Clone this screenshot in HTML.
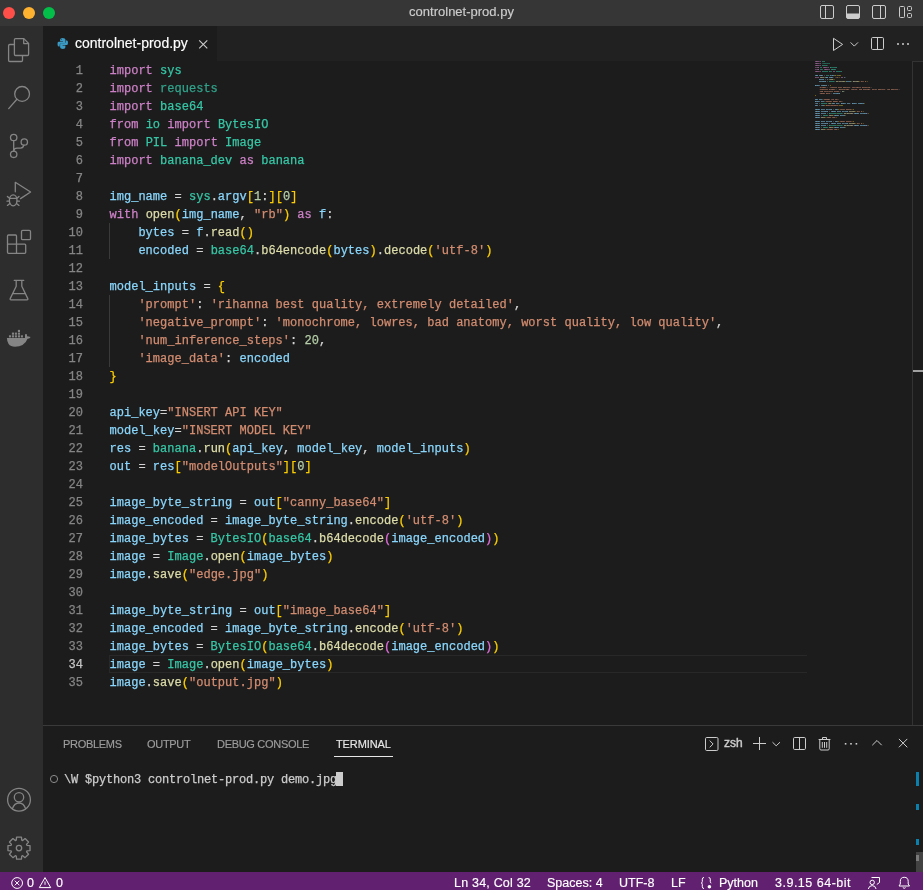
<!DOCTYPE html>
<html><head><meta charset="utf-8">
<style>
*{margin:0;padding:0;box-sizing:border-box}
html,body{width:923px;height:890px;overflow:hidden;background:#1c1c1c}
body{position:relative;font-family:"Liberation Sans",sans-serif;color:#ccc}
#root{position:absolute;left:0;top:0;width:923px;height:890px;will-change:transform;overflow:hidden}
.ln,.num,.term{-webkit-text-stroke:0.25px currentColor}
.st,#tabtext,#ttext,.ptab{-webkit-text-stroke:0.15px currentColor}
.abs{position:absolute}
#title{left:0;top:0;width:923px;height:26px;background:#363636}
.tl{position:absolute;top:7px;width:12px;height:12px;border-radius:50%}
#ttext{position:absolute;left:0;width:923px;top:-1px;height:26px;line-height:26px;text-align:center;font-size:13px;color:#cccccc}
#act{left:0;top:26px;width:43px;height:846px;background:#2d2d2d}
#tabs{left:43px;top:26px;width:880px;height:35px;background:#212121}
#tab{left:43px;top:26px;width:174px;height:35px;background:#1c1c1c}
#tabtext{position:absolute;left:75px;top:26px;height:35px;line-height:35px;font-size:14px;color:#ffffff}
#editor{left:43px;top:61px;width:880px;height:664px;background:#1e1e1e;overflow:hidden}
.num{position:absolute;left:0;width:83px;height:18px;line-height:18px;text-align:right;font-family:"Liberation Mono",monospace;font-size:12px;color:#858585}
.num.cur{color:#c6c6c6}
.ln{position:absolute;left:109.5px;height:18px;line-height:18px;font-family:"Liberation Mono",monospace;font-size:12px;color:#d4d4d4;white-space:pre;letter-spacing:0.02px}
.k{color:#cc80c6}.t{color:#36c7a6}.td{color:#31a28a}.v{color:#8ad6fc}.f{color:#dcdcaa}.s{color:#d28c70}.n{color:#b5cea8}.b1{color:#fcce00}.b2{color:#dc6cd8}
#code{position:absolute;left:0;top:62px;width:923px;height:664px}
#mini{position:absolute;left:815px;top:-1px;width:97px;height:664px;overflow:hidden}
#miniin{position:absolute;left:0;top:-0.7px;transform-origin:0 0;transform:scale(0.1389,0.2)}
.mln{position:absolute;left:0;height:10px;line-height:10px;font-family:"Liberation Mono",monospace;font-size:12px;color:#d4d4d4;white-space:pre;font-weight:bold}
#panel{left:43px;top:725px;width:880px;height:147px;background:#1c1c1c;border-top:1px solid #3a3a3a}
.ptab{position:absolute;top:737px;height:14px;line-height:14px;font-size:11px;color:#9d9d9d;letter-spacing:-0.3px;white-space:nowrap}
#status{left:0;top:872px;width:923px;height:18px;background:#622170}
.st{position:absolute;top:874px;height:18px;line-height:18px;font-size:12.5px;color:#ffffff;white-space:nowrap}
svg{position:absolute;overflow:visible}
</style></head><body><div id="root">
<div id="title" class="abs"></div>
<div class="tl" style="left:3px;background:#ff4f48"></div>
<div class="tl" style="left:23px;background:#ffb22f"></div>
<div class="tl" style="left:43px;background:#03bf4a"></div>
<div id="ttext">controlnet-prod.py</div>

<div id="act" class="abs"></div>
<div id="tabs" class="abs"></div>
<div id="tab" class="abs"></div>
<div id="tabtext">controlnet-prod.py</div>

<div id="code">

<div id="nums" class="abs" style="left:0;top:0">
<div class="num" style="top:0px">1</div>
<div class="num" style="top:18px">2</div>
<div class="num" style="top:36px">3</div>
<div class="num" style="top:54px">4</div>
<div class="num" style="top:72px">5</div>
<div class="num" style="top:90px">6</div>
<div class="num" style="top:108px">7</div>
<div class="num" style="top:126px">8</div>
<div class="num" style="top:144px">9</div>
<div class="num" style="top:162px">10</div>
<div class="num" style="top:180px">11</div>
<div class="num" style="top:198px">12</div>
<div class="num" style="top:216px">13</div>
<div class="num" style="top:234px">14</div>
<div class="num" style="top:252px">15</div>
<div class="num" style="top:270px">16</div>
<div class="num" style="top:288px">17</div>
<div class="num" style="top:306px">18</div>
<div class="num" style="top:324px">19</div>
<div class="num" style="top:342px">20</div>
<div class="num" style="top:360px">21</div>
<div class="num" style="top:378px">22</div>
<div class="num" style="top:396px">23</div>
<div class="num" style="top:414px">24</div>
<div class="num" style="top:432px">25</div>
<div class="num" style="top:450px">26</div>
<div class="num" style="top:468px">27</div>
<div class="num" style="top:486px">28</div>
<div class="num" style="top:504px">29</div>
<div class="num" style="top:522px">30</div>
<div class="num" style="top:540px">31</div>
<div class="num" style="top:558px">32</div>
<div class="num" style="top:576px">33</div>
<div class="num cur" style="top:594px">34</div>
<div class="num" style="top:612px">35</div>
</div>
<div class="abs" style="left:109px;top:593px;width:698px;height:18px;border:1px solid #282828;border-right:none"></div>
<div class="abs" style="left:109px;top:161px;width:1px;height:36px;background:#3a3a3a"></div>
<div class="abs" style="left:109px;top:233px;width:1px;height:72px;background:#3a3a3a"></div>
<div id="lines" class="abs" style="left:0;top:0">
<div class="ln" style="top:0px"><span class="k">import</span> <span class="t">sys</span></div>
<div class="ln" style="top:18px"><span class="k">import</span> <span class="td">requests</span></div>
<div class="ln" style="top:36px"><span class="k">import</span> <span class="t">base64</span></div>
<div class="ln" style="top:54px"><span class="k">from</span> <span class="t">io</span> <span class="k">import</span> <span class="t">BytesIO</span></div>
<div class="ln" style="top:72px"><span class="k">from</span> <span class="t">PIL</span> <span class="k">import</span> <span class="t">Image</span></div>
<div class="ln" style="top:90px"><span class="k">import</span> <span class="t">banana_dev</span> <span class="k">as</span> <span class="t">banana</span></div>
<div class="ln" style="top:108px"></div>
<div class="ln" style="top:126px"><span class="v">img_name</span> = <span class="t">sys</span>.<span class="v">argv</span><span class="b1">[</span><span class="n">1</span>:<span class="b1">]</span><span class="b1">[</span><span class="n">0</span><span class="b1">]</span></div>
<div class="ln" style="top:144px"><span class="k">with</span> <span class="f">open</span><span class="b1">(</span><span class="v">img_name</span>, <span class="s">"rb"</span><span class="b1">)</span> <span class="k">as</span> <span class="v">f</span>:</div>
<div class="ln" style="top:162px">    <span class="v">bytes</span> = <span class="v">f</span>.<span class="f">read</span><span class="b1">()</span></div>
<div class="ln" style="top:180px">    <span class="v">encoded</span> = <span class="t">base64</span>.<span class="f">b64encode</span><span class="b1">(</span><span class="v">bytes</span><span class="b1">)</span>.<span class="f">decode</span><span class="b1">(</span><span class="s">'utf-8'</span><span class="b1">)</span></div>
<div class="ln" style="top:198px"></div>
<div class="ln" style="top:216px"><span class="v">model_inputs</span> = <span class="b1">{</span></div>
<div class="ln" style="top:234px">    <span class="s">'prompt'</span>: <span class="s">'rihanna best quality, extremely detailed'</span>,</div>
<div class="ln" style="top:252px">    <span class="s">'negative_prompt'</span>: <span class="s">'monochrome, lowres, bad anatomy, worst quality, low quality'</span>,</div>
<div class="ln" style="top:270px">    <span class="s">'num_inference_steps'</span>: <span class="n">20</span>,</div>
<div class="ln" style="top:288px">    <span class="s">'image_data'</span>: <span class="v">encoded</span></div>
<div class="ln" style="top:306px"><span class="b1">}</span></div>
<div class="ln" style="top:324px"></div>
<div class="ln" style="top:342px"><span class="v">api_key</span>=<span class="s">"INSERT API KEY"</span></div>
<div class="ln" style="top:360px"><span class="v">model_key</span>=<span class="s">"INSERT MODEL KEY"</span></div>
<div class="ln" style="top:378px"><span class="v">res</span> = <span class="t">banana</span>.<span class="f">run</span><span class="b1">(</span><span class="v">api_key</span>, <span class="v">model_key</span>, <span class="v">model_inputs</span><span class="b1">)</span></div>
<div class="ln" style="top:396px"><span class="v">out</span> = <span class="v">res</span><span class="b1">[</span><span class="s">"modelOutputs"</span><span class="b1">]</span><span class="b1">[</span><span class="n">0</span><span class="b1">]</span></div>
<div class="ln" style="top:414px"></div>
<div class="ln" style="top:432px"><span class="v">image_byte_string</span> = <span class="v">out</span><span class="b1">[</span><span class="s">"canny_base64"</span><span class="b1">]</span></div>
<div class="ln" style="top:450px"><span class="v">image_encoded</span> = <span class="v">image_byte_string</span>.<span class="f">encode</span><span class="b1">(</span><span class="s">'utf-8'</span><span class="b1">)</span></div>
<div class="ln" style="top:468px"><span class="v">image_bytes</span> = <span class="t">BytesIO</span><span class="b1">(</span><span class="t">base64</span>.<span class="f">b64decode</span><span class="b2">(</span><span class="v">image_encoded</span><span class="b2">)</span><span class="b1">)</span></div>
<div class="ln" style="top:486px"><span class="v">image</span> = <span class="t">Image</span>.<span class="f">open</span><span class="b1">(</span><span class="v">image_bytes</span><span class="b1">)</span></div>
<div class="ln" style="top:504px"><span class="v">image</span>.<span class="f">save</span><span class="b1">(</span><span class="s">"edge.jpg"</span><span class="b1">)</span></div>
<div class="ln" style="top:522px"></div>
<div class="ln" style="top:540px"><span class="v">image_byte_string</span> = <span class="v">out</span><span class="b1">[</span><span class="s">"image_base64"</span><span class="b1">]</span></div>
<div class="ln" style="top:558px"><span class="v">image_encoded</span> = <span class="v">image_byte_string</span>.<span class="f">encode</span><span class="b1">(</span><span class="s">'utf-8'</span><span class="b1">)</span></div>
<div class="ln" style="top:576px"><span class="v">image_bytes</span> = <span class="t">BytesIO</span><span class="b1">(</span><span class="t">base64</span>.<span class="f">b64decode</span><span class="b2">(</span><span class="v">image_encoded</span><span class="b2">)</span><span class="b1">)</span></div>
<div class="ln" style="top:594px"><span class="v">image</span> = <span class="t">Image</span>.<span class="f">open</span><span class="b1">(</span><span class="v">image_bytes</span><span class="b1">)</span></div>
<div class="ln" style="top:612px"><span class="v">image</span>.<span class="f">save</span><span class="b1">(</span><span class="s">"output.jpg"</span><span class="b1">)</span></div>
</div>
<div id="mini"><div id="miniin">
<div class="mln" style="top:0px"><span class="k">import</span> <span class="t">sys</span></div>
<div class="mln" style="top:10px"><span class="k">import</span> <span class="td">requests</span></div>
<div class="mln" style="top:20px"><span class="k">import</span> <span class="t">base64</span></div>
<div class="mln" style="top:30px"><span class="k">from</span> <span class="t">io</span> <span class="k">import</span> <span class="t">BytesIO</span></div>
<div class="mln" style="top:40px"><span class="k">from</span> <span class="t">PIL</span> <span class="k">import</span> <span class="t">Image</span></div>
<div class="mln" style="top:50px"><span class="k">import</span> <span class="t">banana_dev</span> <span class="k">as</span> <span class="t">banana</span></div>
<div class="mln" style="top:60px"></div>
<div class="mln" style="top:70px"><span class="v">img_name</span> = <span class="t">sys</span>.<span class="v">argv</span><span class="b1">[</span><span class="n">1</span>:<span class="b1">]</span><span class="b1">[</span><span class="n">0</span><span class="b1">]</span></div>
<div class="mln" style="top:80px"><span class="k">with</span> <span class="f">open</span><span class="b1">(</span><span class="v">img_name</span>, <span class="s">"rb"</span><span class="b1">)</span> <span class="k">as</span> <span class="v">f</span>:</div>
<div class="mln" style="top:90px">    <span class="v">bytes</span> = <span class="v">f</span>.<span class="f">read</span><span class="b1">()</span></div>
<div class="mln" style="top:100px">    <span class="v">encoded</span> = <span class="t">base64</span>.<span class="f">b64encode</span><span class="b1">(</span><span class="v">bytes</span><span class="b1">)</span>.<span class="f">decode</span><span class="b1">(</span><span class="s">'utf-8'</span><span class="b1">)</span></div>
<div class="mln" style="top:110px"></div>
<div class="mln" style="top:120px"><span class="v">model_inputs</span> = <span class="b1">{</span></div>
<div class="mln" style="top:130px">    <span class="s">'prompt'</span>: <span class="s">'rihanna best quality, extremely detailed'</span>,</div>
<div class="mln" style="top:140px">    <span class="s">'negative_prompt'</span>: <span class="s">'monochrome, lowres, bad anatomy, worst quality, low quality'</span>,</div>
<div class="mln" style="top:150px">    <span class="s">'num_inference_steps'</span>: <span class="n">20</span>,</div>
<div class="mln" style="top:160px">    <span class="s">'image_data'</span>: <span class="v">encoded</span></div>
<div class="mln" style="top:170px"><span class="b1">}</span></div>
<div class="mln" style="top:180px"></div>
<div class="mln" style="top:190px"><span class="v">api_key</span>=<span class="s">"INSERT API KEY"</span></div>
<div class="mln" style="top:200px"><span class="v">model_key</span>=<span class="s">"INSERT MODEL KEY"</span></div>
<div class="mln" style="top:210px"><span class="v">res</span> = <span class="t">banana</span>.<span class="f">run</span><span class="b1">(</span><span class="v">api_key</span>, <span class="v">model_key</span>, <span class="v">model_inputs</span><span class="b1">)</span></div>
<div class="mln" style="top:220px"><span class="v">out</span> = <span class="v">res</span><span class="b1">[</span><span class="s">"modelOutputs"</span><span class="b1">]</span><span class="b1">[</span><span class="n">0</span><span class="b1">]</span></div>
<div class="mln" style="top:230px"></div>
<div class="mln" style="top:240px"><span class="v">image_byte_string</span> = <span class="v">out</span><span class="b1">[</span><span class="s">"canny_base64"</span><span class="b1">]</span></div>
<div class="mln" style="top:250px"><span class="v">image_encoded</span> = <span class="v">image_byte_string</span>.<span class="f">encode</span><span class="b1">(</span><span class="s">'utf-8'</span><span class="b1">)</span></div>
<div class="mln" style="top:260px"><span class="v">image_bytes</span> = <span class="t">BytesIO</span><span class="b1">(</span><span class="t">base64</span>.<span class="f">b64decode</span><span class="b2">(</span><span class="v">image_encoded</span><span class="b2">)</span><span class="b1">)</span></div>
<div class="mln" style="top:270px"><span class="v">image</span> = <span class="t">Image</span>.<span class="f">open</span><span class="b1">(</span><span class="v">image_bytes</span><span class="b1">)</span></div>
<div class="mln" style="top:280px"><span class="v">image</span>.<span class="f">save</span><span class="b1">(</span><span class="s">"edge.jpg"</span><span class="b1">)</span></div>
<div class="mln" style="top:290px"></div>
<div class="mln" style="top:300px"><span class="v">image_byte_string</span> = <span class="v">out</span><span class="b1">[</span><span class="s">"image_base64"</span><span class="b1">]</span></div>
<div class="mln" style="top:310px"><span class="v">image_encoded</span> = <span class="v">image_byte_string</span>.<span class="f">encode</span><span class="b1">(</span><span class="s">'utf-8'</span><span class="b1">)</span></div>
<div class="mln" style="top:320px"><span class="v">image_bytes</span> = <span class="t">BytesIO</span><span class="b1">(</span><span class="t">base64</span>.<span class="f">b64decode</span><span class="b2">(</span><span class="v">image_encoded</span><span class="b2">)</span><span class="b1">)</span></div>
<div class="mln" style="top:330px"><span class="v">image</span> = <span class="t">Image</span>.<span class="f">open</span><span class="b1">(</span><span class="v">image_bytes</span><span class="b1">)</span></div>
<div class="mln" style="top:340px"><span class="v">image</span>.<span class="f">save</span><span class="b1">(</span><span class="s">"output.jpg"</span><span class="b1">)</span></div>
</div></div>
<div class="abs" style="left:912px;top:-1px;width:1px;height:664px;background:#333"></div>
<div class="abs" style="left:912px;top:-1px;width:11px;height:1px;background:#333"></div>
<div class="abs" style="left:913px;top:308px;width:10px;height:2px;background:#a0a0a0"></div>
</div>

<div id="panel" class="abs"></div>
<div class="ptab" style="left:63px">PROBLEMS</div>
<div class="ptab" style="left:147px">OUTPUT</div>
<div class="ptab" style="left:217px">DEBUG CONSOLE</div>
<div class="ptab" style="left:336px;color:#e7e7e7;letter-spacing:-0.1px">TERMINAL</div>
<div class="abs" style="left:334px;top:756px;width:59px;height:1px;background:#e7e7e7"></div>

<div class="abs term" style="left:64px;top:771px;height:18px;line-height:18px;font-family:'Liberation Mono',monospace;font-size:12px;color:#cccccc;white-space:pre;letter-spacing:-0.2px">\W $python3 controlnet-prod.py demo.jpg</div>
<div class="abs" style="left:336px;top:772px;width:7px;height:14px;background:#cccccc"></div>

<!-- ICONS -->
<svg width="923" height="890" style="left:0;top:0" viewBox="0 0 923 890">
<g fill="none" stroke="#858585" stroke-width="1.3" stroke-linejoin="round" stroke-linecap="round">
  <!-- explorer -->
  <path d="M14.5 44.5 H9.8 Q8.6 44.5 8.6 45.7 V60.3 Q8.6 61.5 9.8 61.5 H21.3 Q22.5 61.5 22.5 60.3 V55.7"/>
  <path d="M15.6 38.6 H23.8 L28.6 43.4 V54.3 Q28.6 55.5 27.4 55.5 H15.6 Q14.4 55.5 14.4 54.3 V39.8 Q14.4 38.6 15.6 38.6 Z"/>
  <path d="M23.7 38.8 V43.6 H28.4"/>
  <!-- search -->
  <circle cx="22.1" cy="93.9" r="7.4"/>
  <path d="M16.9 99.3 L8.7 108.6"/>
  <!-- scm -->
  <circle cx="13.7" cy="137.5" r="3.2"/>
  <circle cx="24.3" cy="142" r="3.2"/>
  <circle cx="13.7" cy="154.3" r="3.2"/>
  <path d="M13.7 140.7 V151.1"/>
  <path d="M13.7 151 Q14 148.2 17 148.2 H20.5 Q23.2 148.2 23.8 145.2"/>
  <!-- run debug -->
  <path d="M15.3 191.8 V182.3 L30.6 192 L20.5 198.6"/>
  <ellipse cx="13.2" cy="200.3" rx="3.8" ry="5.5"/>
  <path d="M9.6 198.4 H16.8 M7.4 196.4 L9.8 198.6 M19 196.4 L16.6 198.6 M7 201.2 H9.4 M17 201.2 H19.4 M7.4 205.4 L9.9 203.4 M19 205.4 L16.5 203.4"/>
  <!-- extensions -->
  <path d="M8.5 235 H15.5 Q16.5 235 16.5 236 V244.2 H24.7 Q25.7 244.2 25.7 245.2 V252.3 Q25.7 253.3 24.7 253.3 H8.5 Q7.5 253.3 7.5 252.3 V236 Q7.5 235 8.5 235 Z"/>
  <path d="M7.5 244.2 H16.5 V253.3"/>
  <rect x="21.5" y="230.4" width="9" height="9.2" rx="1.2"/>
  <!-- testing -->
  <path d="M14.3 280.4 H23.7 M16.2 280.4 V286.3 L10.2 298.6 Q9.8 299.8 11 299.8 H27 Q28.2 299.8 27.8 298.6 L21.8 286.3 V280.4"/>
  <path d="M12.8 293.6 H25.2"/>
  <!-- account -->
  <circle cx="19" cy="799.7" r="11.4"/>
  <circle cx="19" cy="797.3" r="4.7"/>
  <path d="M12.4 808.8 Q14.3 803 19 803 Q23.7 803 25.6 808.8"/>
  <!-- gear -->
  <path d="M16.27 840.16 L16.55 837.07 L21.45 837.07 L21.73 840.16 A8.4 8.4 0 0 1 22.68 840.55 L25.07 838.57 L28.53 842.03 L26.55 844.42 A8.4 8.4 0 0 1 26.94 845.37 L30.03 845.65 L30.03 850.55 L26.94 850.83 A8.4 8.4 0 0 1 26.55 851.78 L28.53 854.17 L25.07 857.63 L22.68 855.65 A8.4 8.4 0 0 1 21.73 856.04 L21.45 859.13 L16.55 859.13 L16.27 856.04 A8.4 8.4 0 0 1 15.32 855.65 L12.93 857.63 L9.47 854.17 L11.45 851.78 A8.4 8.4 0 0 1 11.06 850.83 L7.97 850.55 L7.97 845.65 L11.06 845.37 A8.4 8.4 0 0 1 11.45 844.42 L9.47 842.03 L12.93 838.57 L15.32 840.55 A8.4 8.4 0 0 1 16.27 840.16 Z"/>
  <circle cx="19" cy="848.1" r="2.7"/>
</g>
<!-- docker -->
<g fill="#858585">
  <path d="M6.9 337.9 H25 V334.6 Q25 333.9 26 333.9 Q26.9 333.9 27 334.8 V336.2 Q28.4 336.4 30.6 337 Q29.8 338.9 27.5 338.7 Q26.2 342.8 22.5 345 Q19.6 346.8 15 346.8 Q10.6 346.8 8.6 344 Q7 341.6 6.9 337.9 Z"/>
  <rect x="8.95" y="335.3" width="2.1" height="2.1"/><rect x="11.90" y="335.3" width="2.1" height="2.1"/><rect x="14.85" y="335.3" width="2.1" height="2.1"/><rect x="17.90" y="335.3" width="2.1" height="2.1"/><rect x="20.85" y="335.3" width="2.1" height="2.1"/><rect x="11.90" y="332.6" width="2.1" height="2.1"/><rect x="14.85" y="332.6" width="2.1" height="2.1"/><rect x="17.90" y="332.6" width="2.1" height="2.1"/><rect x="17.90" y="329.9" width="2.1" height="2.1"/>
</g>
<!-- title bar icons -->
<g fill="none" stroke="#cccccc" stroke-width="1">
  <rect x="820.5" y="5.5" width="13" height="13" rx="1.5"/>
  <path d="M825.5 5.5 V18.5"/>
  <rect x="846.5" y="5.5" width="13" height="13" rx="1.5"/>
  <rect x="872.5" y="5.5" width="13" height="13" rx="1.5"/>
  <path d="M880.5 5.5 V18.5"/>
  <rect x="899.5" y="6.5" width="5" height="11" rx="1"/>
  <rect x="907.5" y="6.5" width="4" height="4" rx="1"/>
  <rect x="907.5" y="13.5" width="4" height="4" rx="1"/>
</g>
<path d="M846.5 13.5 H859.5 V17 Q859.5 18.5 858 18.5 H848 Q846.5 18.5 846.5 17 Z" fill="#cccccc"/>
<!-- editor actions -->
<g fill="none" stroke="#cccccc" stroke-width="1" stroke-linejoin="round">
  <path d="M833.5 38.3 L842.6 44.4 L833.5 50.5 Z"/>
  <path d="M850.6 42.4 L854.3 46.1 L858 42.4"/>
  <rect x="871.5" y="37.5" width="12" height="12" rx="1.2"/>
  <path d="M877.5 37.5 V49.5"/>
</g>
<g fill="#cccccc"><circle cx="898" cy="44" r="1"/><circle cx="903" cy="44" r="1"/><circle cx="908" cy="44" r="1"/></g>
<!-- tab close -->
<path d="M199.2 40.3 L207.3 48.4 M207.3 40.3 L199.2 48.4" stroke="#cccccc" stroke-width="1.1" fill="none"/>
<!-- python icon -->
<g fill="#3b9bc4" transform="translate(0,-0.9)">
  <path d="M62.6 38.8 Q60.1 38.8 60.1 40.5 V42.1 H62.9 V42.7 H58.6 Q57.5 42.7 57.5 45 Q57.5 47.3 58.6 47.3 H59.7 V45.9 Q59.7 44.5 61.1 44.5 H64.2 Q65.4 44.5 65.4 43.1 V40.5 Q65.4 38.8 62.6 38.8 Z"/>
  <path d="M62.9 49.8 Q65.4 49.8 65.4 48.1 V46.5 H62.6 V45.9 H66.9 Q68 45.9 68 43.6 Q68 41.3 66.9 41.3 H65.8 V42.7 Q65.8 44.1 64.4 44.1 H61.3 Q60.1 44.1 60.1 45.5 V48.1 Q60.1 49.8 62.9 49.8 Z"/>
</g>
<circle cx="61.4" cy="39.6" r="0.5" fill="#1c1c1c" opacity="0.6"/>
<!-- panel actions -->
<g fill="none" stroke="#cccccc" stroke-width="1" stroke-linejoin="round">
  <rect x="705.5" y="737.5" width="12.5" height="13" rx="1.2"/>
  <path d="M709.7 740.6 L713.1 744 L709.7 747.4"/>
  <path d="M759.5 737 V750 M753 743.5 H766"/>
  <path d="M772.5 742.2 L776.2 745.8 L780 742.2"/>
  <rect x="793.5" y="737.5" width="12" height="12" rx="1.2"/>
  <path d="M799.5 737.5 V749.5"/>
  <path d="M818.6 739.5 H830.4 M822.5 739.5 V737.5 H826.5 V739.5 M819.8 739.5 V748.8 Q819.8 750 821 750 H828 Q829.2 750 829.2 748.8 V739.5 M822.3 742 V747.8 M824.5 742 V747.8 M826.7 742 V747.8"/>
  <path d="M872.3 745.2 L877 740.5 L881.7 745.2"/>
  <path d="M898.9 738.9 L907.3 747.3 M907.3 738.9 L898.9 747.3"/>
</g>
<g fill="#cccccc"><rect x="844.8" y="743" width="1.6" height="1.6"/><rect x="850.2" y="743" width="1.6" height="1.6"/><rect x="855.6" y="743" width="1.6" height="1.6"/></g>
<!-- terminal circle -->
<circle cx="54" cy="779" r="3.6" fill="none" stroke="#8b8b8b" stroke-width="1"/>
</svg>
<div class="abs" style="left:724px;top:736px;height:14px;line-height:14px;font-size:12px;-webkit-text-stroke:0.4px #cccccc;color:#cccccc">zsh</div>
<!-- terminal scrollbar marks -->
<div class="abs" style="left:916px;top:772px;width:3px;height:14px;background:#0c80ad"></div>
<div class="abs" style="left:916px;top:804px;width:3px;height:6px;background:#0c80ad"></div>
<div class="abs" style="left:916px;top:839px;width:3px;height:6px;background:#0c80ad"></div>
<div class="abs" style="left:916px;top:852px;width:7px;height:20px;background:#424242"></div>
<div class="abs" style="left:916px;top:855px;width:3px;height:6px;background:#7a7a7a"></div>

<div id="status" class="abs"></div>
<div class="st" style="left:454px;letter-spacing:0.2px">Ln 34, Col 32</div>
<div class="st" style="left:547px">Spaces: 4</div>
<div class="st" style="left:619px">UTF-8</div>
<div class="st" style="left:671px">LF</div>
<div class="st" style="left:719px">Python</div>
<div class="st" style="left:775px;letter-spacing:0.5px">3.9.15 64-bit</div>
<div class="st" style="left:27px">0</div>
<div class="st" style="left:56px">0</div>
<svg width="923" height="890" style="left:0;top:0" viewBox="0 0 923 890">
<g fill="none" stroke="#ffffff" stroke-width="1">
  <circle cx="17.1" cy="883" r="5.4"/>
  <path d="M14.8 880.7 L19.4 885.3 M19.4 880.7 L14.8 885.3"/>
  <path d="M45 877.6 L50.7 887.6 H39.3 Z" stroke-linejoin="round"/>
  <path d="M45 881.5 V884.8"/>
  <!-- bracket dot -->
  <path d="M704 877.5 Q702.3 877.5 702.3 879.2 V881.6 Q702.3 883 701.3 883 Q702.3 883 702.3 884.4 V886.8 Q702.3 888.5 704 888.5"/>
  <path d="M708.6 877.5 Q710.3 877.5 710.3 879.2 V881.6 Q710.3 883 711.3 883"/>
  <!-- feedback -->
  <path d="M871.5 877.5 H879.5 V882.5 L876.8 884.5"/>
  <circle cx="872.2" cy="882.4" r="2.2"/>
  <path d="M868.3 889 Q869 885.6 872.2 885.6 Q875.4 885.6 876.1 889"/>
  <!-- bell -->
  <path d="M899 886 H909.5 L908.2 884 V881.5 Q908.2 877.3 904.2 877.3 Q900.3 877.3 900.3 881.5 V884 Z" stroke-linejoin="round"/>
  <path d="M902.8 887.6 Q904.2 889 905.6 887.6"/>
</g>
<circle cx="709.4" cy="886.8" r="1.8" fill="#ffffff"/>
</svg>

</div></body></html>
